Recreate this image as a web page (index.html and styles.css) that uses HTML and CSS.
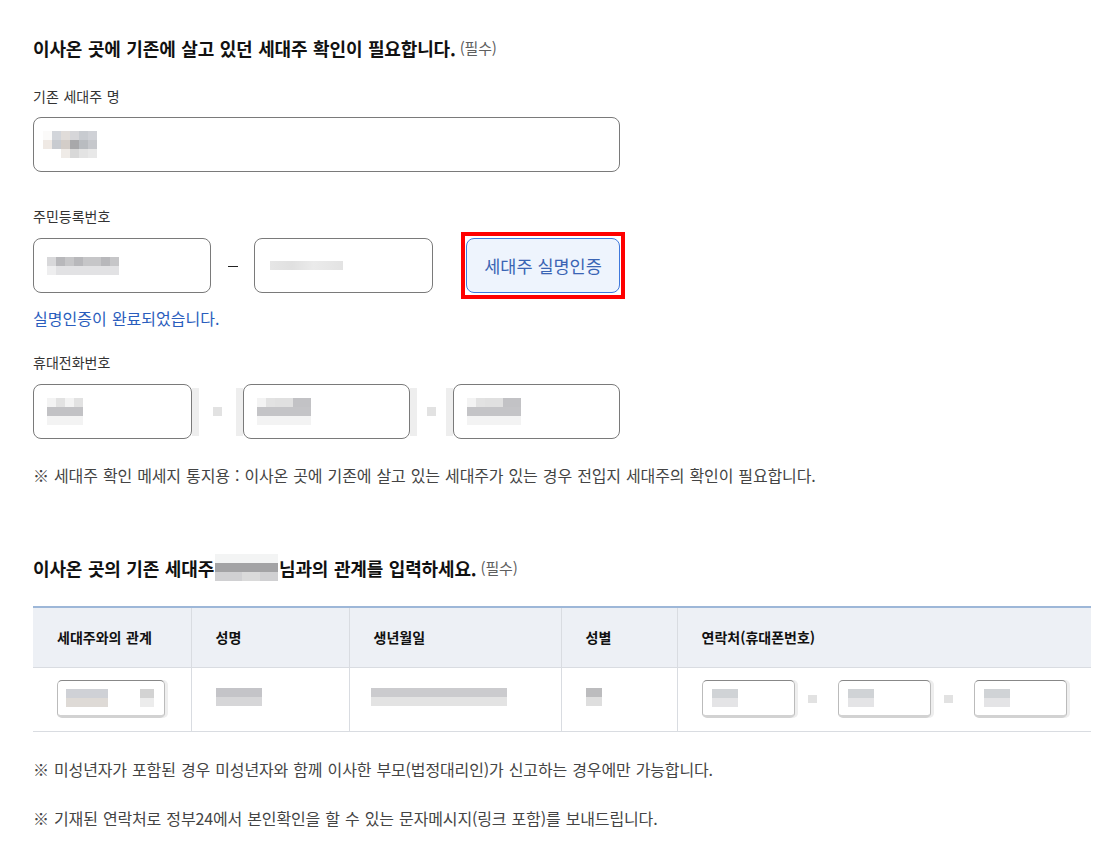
FILE: index.html
```html
<!DOCTYPE html>
<html lang="ko">
<head>
<meta charset="utf-8">
<link rel="stylesheet" href="styles.css">
</head>
<body>
<div class="wrap">
  <h2 class="title">이사온 곳에 기존에 살고 있던 세대주 확인이 필요합니다. <span class="req">(필수)</span></h2>

  <div class="label first">기존 세대주 명</div>
  <div class="field full">
    <span class="mosaic m-name"><i></i><i></i><i></i><i></i><i></i><i></i><i></i><i></i><i></i><i></i><i></i><i></i><i></i><i></i><i></i><i></i><i></i><i></i></span>
  </div>

  <div class="label">주민등록번호</div>
  <div class="row rrn">
    <div class="field w178"><span class="mosaic m-rrn1"><i></i><i></i><i></i><i></i><i></i><i></i><i></i><i></i><i></i><i></i><i></i><i></i><i></i><i></i><i></i><i></i></span></div>
    <span class="dash"></span>
    <div class="field w179"><span class="m-rrn2"></span></div>
    <span class="hl"><button class="auth">세대주 실명인증</button></span>
  </div>
  <div class="done">실명인증이 완료되었습니다.</div>

  <div class="label l3">휴대전화번호</div>
  <div class="row phone">
    <div class="field w159"><span class="mosaic m-ph"><i></i><i></i><i></i><i></i><i></i><i></i><i></i><i></i><i></i><i></i><i></i><i></i></span></div>
    <span class="sep"><b class="bar"></b><b class="dot"></b><b class="bar"></b></span>
    <div class="field w167"><span class="mosaic m-ph m-ph2"><i></i><i></i><i></i><i></i><i></i><i></i><i></i><i></i><i></i><i></i><i></i><i></i><i></i><i></i><i></i><i></i><i></i><i></i></span></div>
    <span class="sep"><b class="bar"></b><b class="dot"></b><b class="bar"></b></span>
    <div class="field w167"><span class="mosaic m-ph m-ph3"><i></i><i></i><i></i><i></i><i></i><i></i><i></i><i></i><i></i><i></i><i></i><i></i><i></i><i></i><i></i><i></i><i></i><i></i></span></div>
  </div>
  <p class="note n0">※ 세대주 확인 메세지 통지용 : 이사온 곳에 기존에 살고 있는 세대주가 있는 경우 전입지 세대주의 확인이 필요합니다.</p>

  <h2 class="title second">이사온 곳의 기존 세대주<span class="mosaic m-title"><i></i><i></i><i></i><i></i><i></i><i></i><i></i><i></i><i></i><i></i><i></i><i></i><i></i><i></i><i></i><i></i><i></i><i></i><i></i><i></i><i></i></span>님과의 관계를 입력하세요. <span class="req">(필수)</span></h2>

  <table class="rel">
    <thead>
      <tr>
        <th class="c1">세대주와의 관계</th>
        <th class="c2">성명</th>
        <th class="c3">생년월일</th>
        <th class="c4">성별</th>
        <th class="c5">연락처(휴대폰번호)</th>
      </tr>
    </thead>
    <tbody>
      <tr>
        <td><span class="cellbox sel"><span class="blk b1"></span><span class="blk b2"></span></span></td>
        <td><span class="blk nm"></span></td>
        <td><span class="blk bd"></span></td>
        <td><span class="blk sx"></span></td>
        <td>
          <div class="tphone">
            <span class="cellbox tp"><span class="blk p"></span></span><span class="tsep"></span>
            <span class="cellbox tp"><span class="blk p"></span></span><span class="tsep"></span>
            <span class="cellbox tp"><span class="blk p"></span></span>
          </div>
        </td>
      </tr>
    </tbody>
  </table>

  <p class="note n1">※ 미성년자가 포함된 경우 미성년자와 함께 이사한 부모(법정대리인)가 신고하는 경우에만 가능합니다.</p>
  <p class="note n2">※ 기재된 연락처로 정부24에서 본인확인을 할 수 있는 문자메시지(링크 포함)를 보내드립니다.</p>
</div>
</body>
</html>
```

FILE: styles.css
```css
* { box-sizing: border-box; }
html, body { margin: 0; padding: 0; background: #fff; }
body {
  font-family: "Noto Sans CJK KR", "Noto Sans", sans-serif;
  color: #222;
  word-spacing: 0.05em;
}
.wrap {
  width: 1091px;
  padding: 35px 0 0 33px;
}
.title {
  margin: 0;
  font-size: 18px;
  line-height: 26px;
  font-weight: 700;
  color: #111;
  display: flex;
  align-items: center;
  white-space: nowrap;
  letter-spacing: -0.16px;
}
.title .req {
  font-size: 15px;
  font-weight: 400;
  color: #5f5f5f;
  margin-left: 4px;
}
.label {
  font-size: 14px;
  line-height: 20px;
  color: #333;
  margin-top: 34px;
}
.label.first { margin-top: 25px; }
.label.l3 { margin-top: 23px; }
.field {
  height: 55px;
  border: 1px solid #7a7a7a;
  border-radius: 8px;
  margin-top: 11px;
  display: flex;
  align-items: center;
  padding-left: 13px;
  background: #fff;
}
.field.full { width: 587px; padding-left: 9px; }
.row {
  display: flex;
  align-items: center;
  margin-top: 12px;
}
.row.rrn { margin-top: 6px; }
.row .field { margin-top: 0; }
.w178 { width: 178px; }
.w179 { width: 179px; }
.w159 { width: 159px; }
.w167 { width: 167px; }
.dash {
  width: 43px;
  display: flex;
  justify-content: center;
}
.dash::before {
  content: "";
  width: 10px;
  height: 1px;
  background: #222;
  margin-top: 2px;
}
.hl {
  margin-left: 28px;
  border: 4px solid #ff0000;
  padding: 2px 1px;
  display: flex;
}
.auth {
  width: 154px;
  height: 55px;
  border: 1px solid #3f78dc;
  border-radius: 8px;
  background: #eef4fd;
  color: #3a64b4;
  font-family: inherit;
  font-size: 17.5px;
  padding: 0;
}
.done {
  margin-top: 8px;
  font-size: 16px;
  line-height: 22px;
  color: #2a5dbd;
}
.phone .field { padding-left: 13px; }
.sep {
  width: 51px;
  display: flex;
  align-items: center;
  justify-content: space-between;
  height: 55px;
}
.phone .sep:nth-child(4) { width: 43px; }
.sep .bar {
  width: 7px;
  height: 48px;
  background: #eeeeee;
}
.sep .dot {
  width: 9px;
  height: 9px;
  background: #e2e2e2;
}
.note {
  margin: 25px 0 0;
  font-size: 16px;
  line-height: 22px;
  color: #444;
  white-space: nowrap;
  letter-spacing: -0.14px;
}
.title.second { margin-top: 68px; }

/* pixelated (censored) blocks */
.mosaic {
  display: inline-grid;
}
.mosaic i { display: block; background: #c9cbcf; }
.m-name {
  grid-template-columns: repeat(6, 9px);
  grid-template-rows: repeat(3, 9px);
}
.m-name i:nth-child(1) { background: #fbfaf9; }
.m-name i:nth-child(2) { background: #d2d5da; }
.m-name i:nth-child(3) { background: #e0dcd9; }
.m-name i:nth-child(4) { background: #d6d6d9; }
.m-name i:nth-child(5) { background: #c8cbd0; }
.m-name i:nth-child(6) { background: #cfd1d6; }
.m-name i:nth-child(7) { background: #efe9e4; }
.m-name i:nth-child(8) { background: #c8cbd0; }
.m-name i:nth-child(9) { background: #d3cdc8; }
.m-name i:nth-child(10) { background: #a8a8aa; }
.m-name i:nth-child(11) { background: #b9bcc0; }
.m-name i:nth-child(12) { background: #c6c8cc; }
.m-name i:nth-child(13) { background: #fff; }
.m-name i:nth-child(14) { background: #fff; }
.m-name i:nth-child(15) { background: #efebe7; }
.m-name i:nth-child(16) { background: #d8d8d8; }
.m-name i:nth-child(17) { background: #e3e3e3; }
.m-name i:nth-child(18) { background: #e8e8e8; }

.m-rrn1 {
  grid-template-columns: repeat(8, 9px);
  grid-template-rows: repeat(2, 9px);
}
.m-rrn1 i:nth-child(-n+8) { background: #c6c6c8; }
.m-rrn1 i:nth-child(n+9) { background: #e2e2e4; }
.m-rrn1 i:nth-child(2), .m-rrn1 i:nth-child(4), .m-rrn1 i:nth-child(7) { background: #b8b8bb; }
.m-rrn1 i:nth-child(1) { background: #d8d8da; }
.m-rrn1 i:nth-child(9) { background: #eeeeef; }
.m-rrn2 {
  width: 73px;
  height: 9px;
  margin-left: 2px;
  background: linear-gradient(90deg, #e6e6e6, #e0e0e0 30%, #ebebeb 60%, #e3e3e3);
}
.m-ph {
  grid-template-columns: repeat(4, 9px);
  grid-template-rows: repeat(3, 9px);
}
.m-ph i { background: #f3f3f3; }
.m-ph i:nth-child(n+5):nth-child(-n+8) { background: #c2c2c5; }
.m-ph i:nth-child(6) { background: #b8b2ae; }
.m-ph i:nth-child(8) { background: #a8adb3; }
.m-ph i:nth-child(2), .m-ph i:nth-child(4) { background: #e2e2e2; }
.m-ph2, .m-ph3 { grid-template-columns: repeat(6, 9px); }
.m-ph2 i, .m-ph3 i { background: #f3f3f3; }
.m-ph2 i:nth-child(n+7):nth-child(-n+12),
.m-ph3 i:nth-child(n+7):nth-child(-n+12) { background: #c4c4c7; }
.m-ph2 i:nth-child(8) { background: #b2aeab; }
.m-ph2 i:nth-child(11) { background: #cfd2d6; }
.m-ph2 i:nth-child(12), .m-ph3 i:nth-child(12) { background: #f8f8f8; }
.m-ph2 i:nth-child(7) { background: #f1efed; }
.m-ph3 i:nth-child(7) { background: #bcb4b0; }
.m-ph3 i:nth-child(10) { background: #bfb6b4; }
.m-ph2 i:nth-child(3), .m-ph2 i:nth-child(4),
.m-ph3 i:nth-child(3), .m-ph3 i:nth-child(4), .m-ph3 i:nth-child(5) { background: #e0e0e0; }
.m-title {
  grid-template-columns: repeat(7, 9px);
  grid-template-rows: repeat(3, 9px);
  margin: 0 1px 0 1px;
}
.m-title i:nth-child(-n+7) { background: #f3f4f4; }
.m-title i:nth-child(n+8):nth-child(-n+14) { background: #a3a3a5; }
.m-title i:nth-child(n+15) { background: #d0d0d2; }
.m-title i:nth-child(9), .m-title i:nth-child(12) { background: #8e8e90; }
.m-title i:nth-child(11) { background: #9a9896; }
.m-title i:nth-child(18), .m-title i:nth-child(19) { background: #dadada; }

/* table */
.rel {
  margin-top: 25px;
  width: 1058px;
  border-collapse: collapse;
  table-layout: fixed;
  border-top: 2px solid #9db7d8;
}
.rel th {
  background: #edf0f5;
  height: 60px;
  text-align: left;
  font-size: 14px;
  font-weight: 700;
  color: #111;
  padding: 0 0 0 24px;
  border-left: 1px solid #d9dce1;
  border-bottom: 1px solid #d9dce1;
}
.rel th:first-child, .rel td:first-child { border-left: 0; }
.rel .c1 { width: 158px; }
.rel .c2 { width: 158px; }
.rel .c3 { width: 212px; }
.rel .c4 { width: 116px; }
.rel td {
  height: 64px;
  border-left: 1px solid #d9dce1;
  border-bottom: 1px solid #d9dce1;
  padding: 0 0 0 24px;
  vertical-align: middle;
}
.cellbox {
  display: inline-flex;
  align-items: center;
  height: 38px;
  border: 1px solid #bbb;
  border-top-color: #888;
  border-bottom: 3px solid #d2d2d2;
  border-radius: 5px;
  background: #fff;
  box-shadow: 3px 0 0 #eeeeee;
}
.cellbox.sel { width: 108px; padding-left: 8px; justify-content: space-between; padding-right: 10px; }
.blk { display: inline-block; height: 18px; }
.b1 { width: 42px; background: linear-gradient(180deg, #cfd1d6 50%, #dedad6 50%); }
.b2 { width: 14px; background: linear-gradient(180deg, #d3d3d3 50%, #ececec 50%); }
.nm { width: 46px; background: linear-gradient(180deg, #c4c4c8 50%, #d6d6d8 50%); }
.bd { width: 136px; margin-left: -3px; background: linear-gradient(180deg, #cbcbce 50%, #e3e3e3 50%); }
.sx { width: 16px; background: linear-gradient(180deg, #bcbcbe 50%, #dedede 50%); }
.tphone { display: flex; align-items: center; }
.cellbox.tp { width: 93px; padding-left: 9px; }
.p { width: 26px; background: linear-gradient(180deg, #d0d3d6 50%, #e4e4e6 50%); }
.tsep {
  width: 43px;
  height: 8px;
  background: linear-gradient(90deg, transparent 13px, #e2e2e2 13px, #e2e2e2 22px, transparent 22px);
}
.note.n1 { margin-top: 26px; }
.note.n2 { margin-top: 27px; }
```
